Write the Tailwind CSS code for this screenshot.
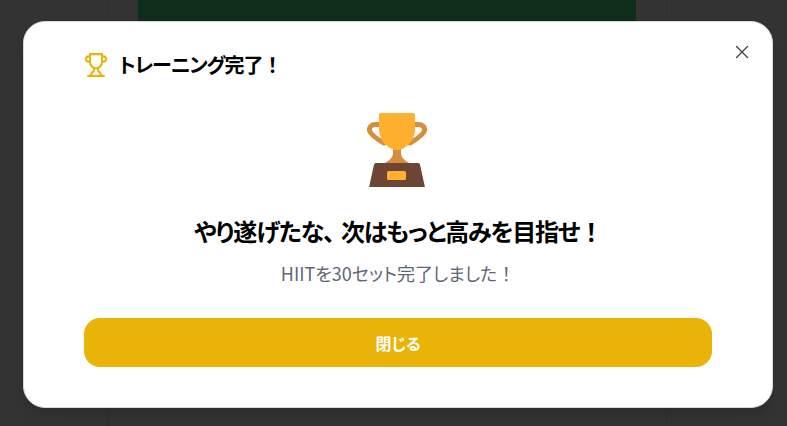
<!DOCTYPE html>
<html lang="ja"><head><meta charset="utf-8"><script src="https://cdn.jsdelivr.net/npm/@tailwindcss/browser@4"></script></head>
<body class="m-0 h-[426px] w-[787px] overflow-hidden bg-[#333333] font-['Noto_Sans_CJK_JP','Noto_Sans',sans-serif] [font-feature-settings:'palt']">
<div class="relative h-[426px] w-[787px]">
  <div class="absolute inset-y-0 left-[107px] w-[560px] border-x border-[#2f2f2f]">
    <div class="mx-auto h-[60px] w-[498px] rounded-b-3xl bg-[#0f2d1b]"></div>
  </div>
  <div class="absolute left-[23px] top-[21px] h-[387px] w-[750px] rounded-[22px] border border-[#d9d9d9] bg-white px-[60px] shadow-lg">
    <button class="absolute right-[22px] top-[22px] text-[#3f3f46]" aria-label="閉じる">
      <svg width="16" height="16" viewBox="0 0 16 16" fill="none" stroke="currentColor" stroke-width="1.3" stroke-linecap="round"><path d="M2.500 2.500l11 11M13.500 2.500l-11 11"/></svg>
    </button>
    <div class="flex h-[86px] items-center gap-[11px] leading-none">
      <svg width="24" height="26" viewBox="0 0 24 24" fill="none" stroke="#eab308" stroke-width="2" stroke-linecap="round" stroke-linejoin="round" preserveAspectRatio="none" class="shrink-0">
        <path d="M6 9H4.500a2.500 2.500 0 0 1 0-5H6"/><path d="M18 9h1.500a2.500 2.500 0 0 0 0-5H18"/><path d="M4 22h16"/><path d="M10 14.660V17c0 .55-.47.98-.97 1.210C7.850 18.750 7 20.240 7 22"/><path d="M14 14.660V17c0 .55.47.98.97 1.210C16.150 18.750 17 20.240 17 22"/><path d="M18 2H6v7a6 6 0 0 0 12 0V2Z"/>
      </svg>
      <h2 class="text-[20px] font-bold tracking-[-1px] text-black">トレーニング完了<span class="[font-feature-settings:normal]">！</span></h2>
    </div>
    <div class="flex flex-col items-center">
      <svg width="64" height="80" viewBox="0 0 64 80" class="-mt-px">
        <path d="M15 17.500H9.500C5.500 17.500 3 20 3.500 23.500 4.500 28 11 32 18 36" fill="none" stroke="#d68d3e" stroke-width="5" stroke-linecap="round"/>
        <path d="M47 17.500h5.500c4 0 6.500 2.500 6 6C57.500 28 51 32 44 36" fill="none" stroke="#d68d3e" stroke-width="5" stroke-linecap="round"/>
        <path d="M27 40h8v6c0 4 3 7 8 10H19c5-3 8-6 8-10z" fill="#d68d3e"/>
        <path d="M13 8a2 2 0 0 1 2-2h32a2 2 0 0 1 2 2v14c0 11-9 21-18 21S13 33 13 22z" fill="#ffb02e"/>
        <path d="M8 57.500a2 2 0 0 1 2-1.500h42a2 2 0 0 1 2 1.500l5 23H3z" fill="#6d4534"/>
        <rect x="21" y="64" width="19" height="9" rx="1.500" fill="#ffb02e"/>
      </svg>
      <p class="mt-[28px] text-[24px] font-bold leading-8 tracking-[-1.200px] text-black">やり遂げたな<span class="tracking-[-6px] [font-feature-settings:normal]">、</span>次はもっと高みを目指せ<span class="[font-feature-settings:normal]">！</span></p>
      <p class="mt-[12px] text-[18px] leading-7 text-[#5f6775]">HIITを30セット完了しました<span class="[font-feature-settings:normal]">！</span></p>
    </div>
    <button class="mt-[31px] flex h-[49px] w-[628px] items-center justify-center rounded-2xl bg-[#eab308] text-base font-bold text-white">閉じる</button>
  </div>
</div>
</body></html>
